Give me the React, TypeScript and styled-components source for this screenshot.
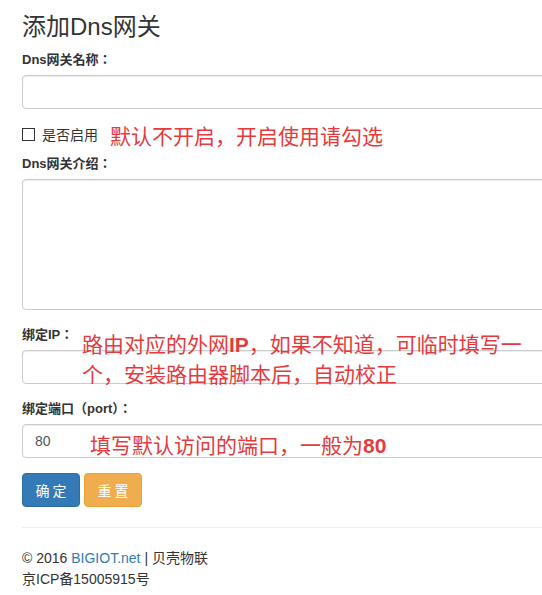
import React from "react";
import styled, {createGlobalStyle} from "styled-components";

const GlobalStyle = createGlobalStyle`
  html, body {
    margin: 0;
    padding: 0;
    background: #fff;
    overflow: hidden;
  }
  body {
    font-family: "Liberation Sans", Arial, "Noto Sans CJK SC", sans-serif;
    color: #333;
  }
  * {
    box-sizing: border-box;
  }
`;

const Page = styled.div`
  width: 620px;
  padding: 14px 0 0 22px;
`;

const Title = styled.h3`
  margin: 0 0 10px;
  font-size: 24px;
  line-height: 26px;
  font-weight: 400;
  color: #333;
`;

const FormGroup = styled.div`
  position: relative;
  margin-bottom: 15px;
`;

const Label = styled.label`
  display: block;
  margin-bottom: 5px;
  font-family: "Liberation Sans", Arial, "Noto Sans CJK TC", sans-serif;
  font-size: 13px;
  line-height: 20px;
  font-weight: 700;
  color: #333;
`;

const Input = styled.input`
  display: block;
  width: 100%;
  height: 34px;
  padding: 6px 12px;
  font-family: inherit;
  font-size: 14px;
  color: #555;
  background: #fff;
  border: 1px solid #ccc;
  border-radius: 4px;
  box-shadow: inset 0 1px 1px rgba(0, 0, 0, 0.075);
  outline: none;
`;

const TextArea = styled.textarea`
  display: block;
  width: 100%;
  height: 131px;
  padding: 6px 12px;
  font-family: inherit;
  font-size: 14px;
  border: 1px solid #ccc;
  border-radius: 4px;
  box-shadow: inset 0 1px 1px rgba(0, 0, 0, 0.075);
  resize: none;
  outline: none;
`;

const CheckRow = styled.div`
  display: flex;
  align-items: center;
  height: 20px;
  margin: 0 0 10px;
`;

const CheckBox = styled.input.attrs({type: "checkbox"})`
  appearance: none;
  width: 13px;
  height: 13px;
  margin: 1px 7px 0 0;
  border: 1px solid #333;
  background: #fff;
  flex-shrink: 0;
`;

const CheckText = styled.span`
  font-size: 14px;
  color: #333;
`;

const Note = styled.span<{ $left?: number; $top?: number }>`
  font-family: "Noto Sans CJK SC", "Liberation Sans", sans-serif;
  font-size: 21px;
  line-height: 28px;
  font-weight: 400;
  color: #e63a3e;
  white-space: nowrap;
  ${(p) => p.$left !== undefined && `
    position: absolute;
    left: ${p.$left}px;
    top: ${p.$top}px;
    pointer-events: none;
  `}
`;

const InlineNote = styled(Note)`
  margin-left: 12px;
  margin-top: 2px;
`;

const Strong = styled.b`
  font-family: "Liberation Sans", Arial, sans-serif;
  font-weight: 700;
`;

const Buttons = styled.div`
  display: flex;
  gap: 4px;
`;

const Button = styled.button<{ $variant: "primary" | "warning" }>`
  height: 34px;
  width: 58px;
  padding: 0;
  font-family: "Noto Sans CJK SC", sans-serif;
  font-size: 14px;
  letter-spacing: 3px;
  text-indent: 3px;
  color: #fff;
  border-radius: 4px;
  border: 1px solid ${(p) => (p.$variant === "primary" ? "#2e6da4" : "#eea236")};
  background: ${(p) => (p.$variant === "primary" ? "#337ab7" : "#f0ad4e")};
`;

const Divider = styled.hr`
  margin: 20px 0 20px;
  border: 0;
  border-top: 1px solid #eee;
`;

const Footer = styled.footer`
  font-size: 14px;
  line-height: 21px;
  color: #333;
`;

const Link = styled.a`
  color: #337ab7;
  text-decoration: none;
`;

export default function App() {
    return (
        <>
            <GlobalStyle/>
            <Page>
                <Title>添加Dns网关</Title>

                <FormGroup>
                    <Label>Dns网关名称：</Label>
                    <Input type="text"/>
                </FormGroup>

                <CheckRow>
                    <CheckBox/>
                    <CheckText>是否启用</CheckText>
                    <InlineNote>默认不开启，开启使用请勾选</InlineNote>
                </CheckRow>

                <FormGroup>
                    <Label>Dns网关介绍：</Label>
                    <TextArea/>
                </FormGroup>

                <FormGroup>
                    <Label>绑定IP：</Label>
                    <Input type="text"/>
                    <Note $left={60} $top={4}>
                        路由对应的外网<Strong>IP</Strong>，如果不知道，可临时填写一<br/>个，安装路由器脚本后，自动校正
                    </Note>
                </FormGroup>

                <FormGroup>
                    <Label>绑定端口（port）：</Label>
                    <Input type="text" defaultValue="80"/>
                    <Note $left={68} $top={31}>
                        填写默认访问的端口，一般为<Strong>80</Strong>
                    </Note>
                </FormGroup>

                <Buttons>
                    <Button $variant="primary">确定</Button>
                    <Button $variant="warning">重置</Button>
                </Buttons>

                <Divider/>

                <Footer>
                    <div>© 2016 <Link href="#">BIGIOT.net</Link> | 贝壳物联</div>
                    <div>京ICP备15005915号</div>
                </Footer>
            </Page>
        </>
    );
}
